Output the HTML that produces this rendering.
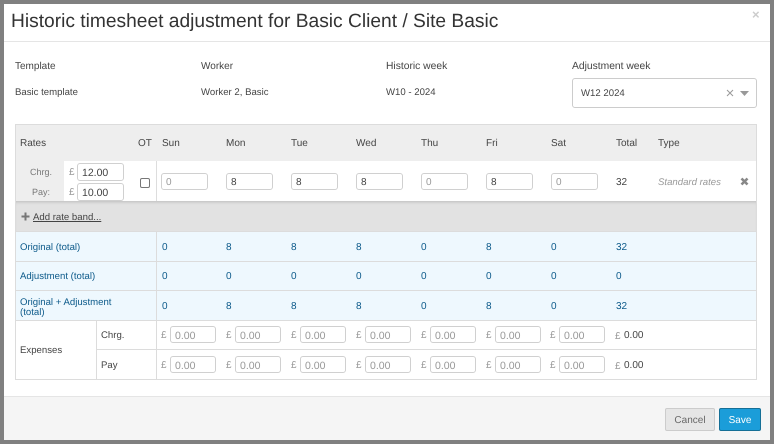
<!DOCTYPE html>
<html style="background:#808080"><head><meta charset="utf-8">
<style>
html,body{margin:0;padding:0}
body{width:774px;height:444px;background:#808080;position:relative;overflow:hidden;font-family:"Liberation Sans",sans-serif;font-size:10px;color:#444;text-rendering:geometricPrecision;filter:blur(0.3px)}
div,span{position:absolute;box-sizing:border-box}
.t{white-space:nowrap;line-height:16px}
.v{font-size:9.6px}
.h{top:136px}
.b{color:#0c5a8a}
.i{background:#fff;border:1px solid #d0d0d0;border-radius:3px;height:17px;width:47px;line-height:18px;padding-left:4px;white-space:nowrap}
.g{color:#999}
.p{color:#999;white-space:nowrap;line-height:16px}
.line{background:#dcdcdc}
</style></head><body>
<div style="left:4px;top:4px;width:766px;height:436px;background:#fff"></div>
<div class="t" style="left:11px;top:11px;font-size:19.2px;line-height:21px;color:#333">Historic timesheet adjustment for Basic Client / Site Basic</div>
<div class="t" style="left:752px;top:7px;font-size:13px;font-weight:bold;color:#ccc">×</div>
<div style="left:4px;top:41px;width:766px;height:1px;background:#e5e5e5"></div>

<div class="t" style="left:15px;top:59px">Template</div>
<div class="t" style="left:201px;top:59px">Worker</div>
<div class="t" style="left:386px;top:59px;font-size:10.3px">Historic week</div>
<div class="t" style="left:572px;top:59px;font-size:10.3px">Adjustment week</div>
<div class="t v" style="left:15px;top:85px">Basic template</div>
<div class="t v" style="left:201px;top:85px">Worker 2, Basic</div>
<div class="t v" style="left:386px;top:85px">W10 - 2024</div>
<div style="left:572px;top:78px;width:185px;height:30px;border:1px solid #ccc;border-radius:3px;background:#fff"></div>
<div class="t v" style="left:581px;top:86px">W12 2024</div>
<svg style="position:absolute;left:726px;top:89px" width="8" height="8" viewBox="0 0 8 8"><path d="M1 1L7 7M7 1L1 7" stroke="#999" stroke-width="1" fill="none"/></svg>
<svg style="position:absolute;left:740px;top:91px" width="9" height="5" viewBox="0 0 9 5"><path d="M0 0H9L4.500 5Z" fill="#999"/></svg>

<!-- table -->
<div style="left:15px;top:124px;width:742px;height:256px;background:#fff;border:1px solid #dcdcdc"></div>
<div style="left:16px;top:125px;width:740px;height:36px;background:#eee"></div>
<div style="left:16px;top:161px;width:48px;height:40px;background:#eee"></div>
<div style="left:16px;top:201px;width:740px;height:30px;background:#e2e2e2;box-shadow:inset 0 3px 3px -2px #bbb"></div>
<div style="left:16px;top:232px;width:740px;height:88px;background:#eef8fe"></div>
<div class="line" style="left:15px;top:231px;width:742px;height:1px"></div>
<div class="line" style="left:15px;top:261px;width:742px;height:1px"></div>
<div class="line" style="left:15px;top:290px;width:742px;height:1px"></div>
<div class="line" style="left:15px;top:320px;width:742px;height:1px"></div>
<div class="line" style="left:96px;top:349px;width:661px;height:1px"></div>
<div class="line" style="left:156px;top:161px;width:1px;height:40px;background:#ddd"></div>
<div class="line" style="left:156px;top:231px;width:1px;height:149px"></div>
<div class="line" style="left:96px;top:320px;width:1px;height:60px"></div>

<div class="t h" style="left:20px">Rates</div>
<div class="t h" style="left:138px">OT</div>
<div class="t h" style="left:162px">Sun</div>
<div class="t h" style="left:226px">Mon</div>
<div class="t h" style="left:291px">Tue</div>
<div class="t h" style="left:356px">Wed</div>
<div class="t h" style="left:421px">Thu</div>
<div class="t h" style="left:486px">Fri</div>
<div class="t h" style="left:551px">Sat</div>
<div class="t h" style="left:616px">Total</div>
<div class="t h" style="left:658px">Type</div>

<div class="t" style="left:30px;top:164px;color:#777;font-size:9px">Chrg.</div>
<div class="t" style="left:32px;top:184px;color:#777;font-size:9px">Pay:</div>
<div class="p" style="left:69px;top:165px">£</div>
<div class="p" style="left:69px;top:185px">£</div>
<div class="i" style="left:77px;top:163px;height:18px;font-size:10.5px">12.00</div>
<div class="i" style="left:77px;top:183px;height:18px;font-size:10.5px">10.00</div>
<div style="left:140px;top:178px;width:10px;height:10px;border:1px solid #777;border-radius:2px;background:#fff"></div>

<div class="i g" style="left:161px;top:173px">0</div>
<div class="i" style="left:226px;top:173px">8</div>
<div class="i" style="left:291px;top:173px">8</div>
<div class="i" style="left:356px;top:173px">8</div>
<div class="i g" style="left:421px;top:173px">0</div>
<div class="i" style="left:486px;top:173px">8</div>
<div class="i g" style="left:551px;top:173px">0</div>
<div class="t" style="left:616px;top:175px">32</div>
<div class="t" style="left:658px;top:175px;font-style:italic;color:#999;font-size:9.6px">Standard rates</div>
<svg style="position:absolute;left:740px;top:177px" width="9" height="9" viewBox="0 0 9 9"><path d="M1.500 1.500L7.500 7.500M7.500 1.500L1.500 7.500" stroke="#888" stroke-width="2.600" fill="none"/></svg>

<svg style="position:absolute;left:21px;top:212px" width="9" height="9" viewBox="0 0 9 9"><path d="M4.500 0.500V8.500M0.500 4.500H8.500" stroke="#777" stroke-width="2" fill="none"/></svg>
<div class="t v" style="left:33px;top:210px;text-decoration:underline">Add rate band...</div>

<div class="t b v" style="left:20px;top:240px">Original (total)</div>
<div class="t b v" style="left:20px;top:269px">Adjustment (total)</div>
<div class="t b v" style="left:20px;top:298px;line-height:10px">Original + Adjustment<br>(total)</div>

<div class="t b" style="left:162px;top:240px">0</div><div class="t b" style="left:226px;top:240px">8</div><div class="t b" style="left:291px;top:240px">8</div><div class="t b" style="left:356px;top:240px">8</div><div class="t b" style="left:421px;top:240px">0</div><div class="t b" style="left:486px;top:240px">8</div><div class="t b" style="left:551px;top:240px">0</div><div class="t b" style="left:616px;top:240px">32</div>
<div class="t b" style="left:162px;top:269px">0</div><div class="t b" style="left:226px;top:269px">0</div><div class="t b" style="left:291px;top:269px">0</div><div class="t b" style="left:356px;top:269px">0</div><div class="t b" style="left:421px;top:269px">0</div><div class="t b" style="left:486px;top:269px">0</div><div class="t b" style="left:551px;top:269px">0</div><div class="t b" style="left:616px;top:269px">0</div>
<div class="t b" style="left:162px;top:299px">0</div><div class="t b" style="left:226px;top:299px">8</div><div class="t b" style="left:291px;top:299px">8</div><div class="t b" style="left:356px;top:299px">8</div><div class="t b" style="left:421px;top:299px">0</div><div class="t b" style="left:486px;top:299px">8</div><div class="t b" style="left:551px;top:299px">0</div><div class="t b" style="left:616px;top:299px">32</div>

<div class="t v" style="left:20px;top:343px">Expenses</div>
<div class="t v" style="left:101px;top:328px">Chrg.</div>
<div class="t v" style="left:101px;top:358px">Pay</div>

<div class="p" style="left:161px;top:328px">£</div><div class="i g" style="left:170px;top:326px;width:46px;font-size:10.5px">0.00</div>
<div class="p" style="left:226px;top:328px">£</div><div class="i g" style="left:235px;top:326px;width:46px;font-size:10.5px">0.00</div>
<div class="p" style="left:291px;top:328px">£</div><div class="i g" style="left:300px;top:326px;width:46px;font-size:10.5px">0.00</div>
<div class="p" style="left:356px;top:328px">£</div><div class="i g" style="left:365px;top:326px;width:46px;font-size:10.5px">0.00</div>
<div class="p" style="left:421px;top:328px">£</div><div class="i g" style="left:430px;top:326px;width:46px;font-size:10.5px">0.00</div>
<div class="p" style="left:486px;top:328px">£</div><div class="i g" style="left:495px;top:326px;width:46px;font-size:10.5px">0.00</div>
<div class="p" style="left:550px;top:328px">£</div><div class="i g" style="left:559px;top:326px;width:46px;font-size:10.5px">0.00</div>
<div class="p" style="left:615px;top:329px">£</div><div class="t" style="left:624px;top:328px">0.00</div>

<div class="p" style="left:161px;top:358px">£</div><div class="i g" style="left:170px;top:356px;width:46px;font-size:10.5px">0.00</div>
<div class="p" style="left:226px;top:358px">£</div><div class="i g" style="left:235px;top:356px;width:46px;font-size:10.5px">0.00</div>
<div class="p" style="left:291px;top:358px">£</div><div class="i g" style="left:300px;top:356px;width:46px;font-size:10.5px">0.00</div>
<div class="p" style="left:356px;top:358px">£</div><div class="i g" style="left:365px;top:356px;width:46px;font-size:10.5px">0.00</div>
<div class="p" style="left:421px;top:358px">£</div><div class="i g" style="left:430px;top:356px;width:46px;font-size:10.5px">0.00</div>
<div class="p" style="left:486px;top:358px">£</div><div class="i g" style="left:495px;top:356px;width:46px;font-size:10.5px">0.00</div>
<div class="p" style="left:550px;top:358px">£</div><div class="i g" style="left:559px;top:356px;width:46px;font-size:10.5px">0.00</div>
<div class="p" style="left:615px;top:359px">£</div><div class="t" style="left:624px;top:358px">0.00</div>

<!-- footer -->
<div style="left:4px;top:396px;width:766px;height:44px;background:#f5f5f5;border-top:1px solid #e5e5e5"></div>
<div class="t" style="left:665px;top:408px;width:50px;height:23px;line-height:23px;text-align:center;background:#e6e6e6;border:1px solid #ccc;border-radius:2px;color:#666">Cancel</div>
<div class="t" style="left:719px;top:408px;width:42px;height:23px;line-height:23px;text-align:center;background:#1b9dd9;border:1px solid #156f96;border-radius:2px;color:#fff">Save</div>
</body></html>
